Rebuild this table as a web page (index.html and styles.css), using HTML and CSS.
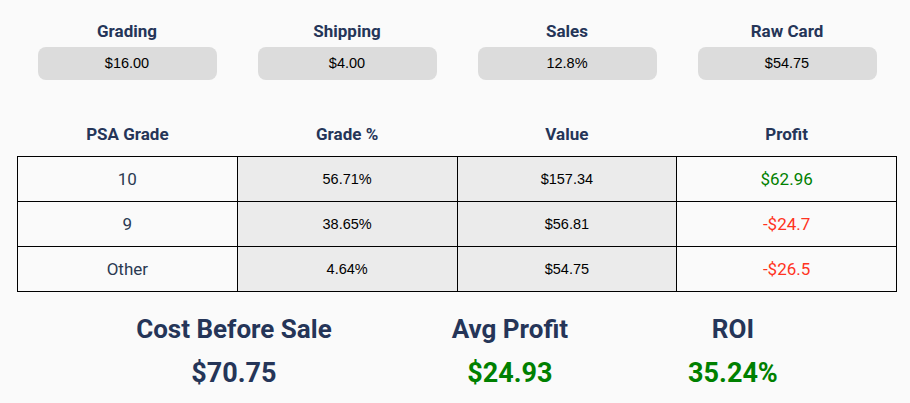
FILE: index.html
```html
<!DOCTYPE html>
<html lang="en">
<head>
    <meta charset="UTF-8">
    <meta name="viewport" content="width=device-width, initial-scale=1.0">
    <title>Grading Calculator</title>
    <link rel="stylesheet" href="styles.css">
</head>
<body>
    <main class="calc">
        <section class="inputs">
            <div class="field">
                <label>Grading</label>
                <div class="field-box">$16.00</div>
            </div>
            <div class="field">
                <label>Shipping</label>
                <div class="field-box">$4.00</div>
            </div>
            <div class="field">
                <label>Sales</label>
                <div class="field-box">12.8%</div>
            </div>
            <div class="field">
                <label>Raw Card</label>
                <div class="field-box">$54.75</div>
            </div>
        </section>

        <table class="grades">
            <thead>
                <tr>
                    <th>PSA Grade</th>
                    <th>Grade %</th>
                    <th>Value</th>
                    <th>Profit</th>
                </tr>
            </thead>
            <tbody>
                <tr>
                    <td class="grade">10</td>
                    <td class="num">56.71%</td>
                    <td class="num">$157.34</td>
                    <td class="profit pos">$62.96</td>
                </tr>
                <tr>
                    <td class="grade">9</td>
                    <td class="num">38.65%</td>
                    <td class="num">$56.81</td>
                    <td class="profit neg">-$24.7</td>
                </tr>
                <tr>
                    <td class="grade">Other</td>
                    <td class="num">4.64%</td>
                    <td class="num">$54.75</td>
                    <td class="profit neg">-$26.5</td>
                </tr>
            </tbody>
        </table>

        <section class="summary">
            <div class="stat">
                <h2>Cost Before Sale</h2>
                <p class="stat-value">$70.75</p>
            </div>
            <div class="stat">
                <h2>Avg Profit</h2>
                <p class="stat-value pos">$24.93</p>
            </div>
            <div class="stat">
                <h2>ROI</h2>
                <p class="stat-value pos">35.24%</p>
            </div>
        </section>
    </main>
</body>
</html>
```

FILE: styles.css
```css
body {
    margin: 0;
    padding: 0;
    background-color: #fafafa;
    font-family: Roboto, "Liberation Sans", Arial, sans-serif;
    color: #253558;
}

.calc {
    width: 880px;
    padding: 21px 0 0 17px;
}

.inputs {
    display: grid;
    grid-template-columns: repeat(4, 220px);
}

.field {
    display: flex;
    flex-direction: column;
    align-items: center;
}

.field label {
    font-weight: bold;
    font-size: 17px;
    line-height: 20px;
    height: 26px;
}

.field-box {
    width: 179px;
    height: 33px;
    line-height: 33px;
    background-color: #dcdcdc;
    border-radius: 8px;
    text-align: center;
    font-family: "Liberation Sans", Arial, sans-serif;
    font-size: 14.5px;
    color: #000;
}

.grades {
    width: 880px;
    margin-top: 39px;
    border-collapse: collapse;
    table-layout: fixed;
}

.grades th {
    font-size: 17px;
    font-weight: bold;
    height: 30px;
    padding: 0 0 7px;
    vertical-align: middle;
}

.grades td {
    border: 1px solid #000;
    height: 45px;
    padding: 0;
    text-align: center;
    box-sizing: border-box;
}

.grades td.grade {
    font-size: 17px;
    color: #2b3a52;
}

.grades td.num {
    background-color: #ebebeb;
    font-family: "Liberation Sans", Arial, sans-serif;
    font-size: 14.5px;
    color: #000;
}

.grades td.profit {
    font-size: 17px;
}

.pos {
    color: #008000;
}

.neg {
    color: #ff3322;
}

.summary {
    display: flex;
    justify-content: center;
    gap: 120px;
    margin-top: 21px;
}

.stat {
    text-align: center;
}

.stat h2 {
    margin: 0;
    font-size: 26px;
    line-height: 32px;
}

.stat-value {
    margin: 12px 0 0;
    font-size: 27px;
    font-weight: bold;
    line-height: 32px;
}

.stat-value.pos {
    color: #008000;
}
```
